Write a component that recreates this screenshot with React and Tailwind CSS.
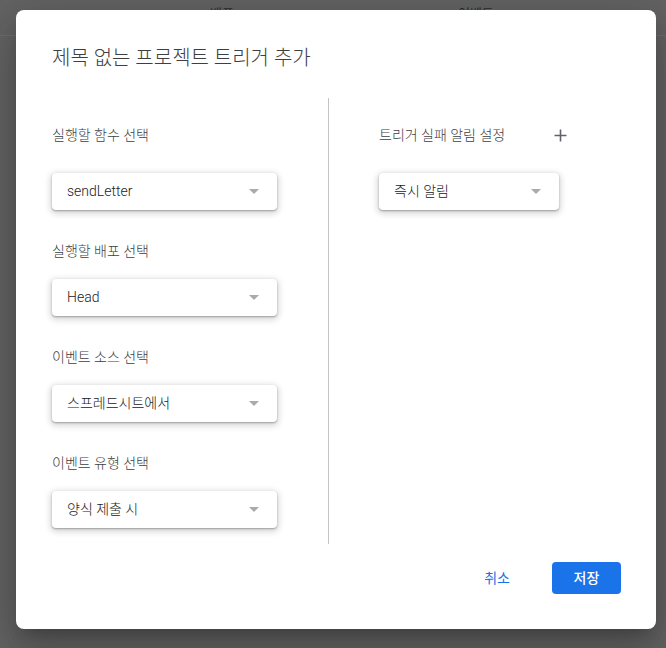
import React from 'react';

function Select({ value, width }) {
    return (
        <div className={`${width} h-[37px] bg-white rounded-[4px] shadow-[0_1px_2px_rgba(0,0,0,0.3),0_2px_6px_2px_rgba(0,0,0,0.15)] flex items-center justify-between pl-[15px] pr-[18px]`}>
            <span className="text-[14px] text-[#202124] font-light">{value}</span>
            <span className="w-0 h-0 border-l-[5px] border-r-[5px] border-t-[5px] border-l-transparent border-r-transparent border-t-[#aaaaaa]"></span>
        </div>
    );
}

function Field({ label, value, first }) {
    return (
        <div className="flex flex-col">
            <div className="text-[14px] text-[#3c4043] font-light h-[20px] leading-[20px]">{label}</div>
            <div className={first ? 'mt-[28px]' : 'mt-[18px]'}>
                <Select value={value} width="w-[225px]" />
            </div>
        </div>
    );
}

export default function App() {
    return (
        <div className="relative w-[666px] h-[648px] overflow-hidden bg-[#636363]" style={{ fontFamily: 'Roboto, "Noto Sans CJK KR", sans-serif' }}>
            {/* page behind the overlay */}
            <div className="h-[36px] border-b border-[#6d6d6d] flex text-[13px] text-[#2a2a2a]">
                <div className="ml-[210px] mt-[4px]">배포</div>
                <div className="ml-[224px] mt-[4px]">이벤트</div>
            </div>

            <div className="absolute left-[16px] top-[10px] w-[640px] h-[619px] bg-white rounded-[8px] shadow-[0_11px_15px_-7px_rgba(0,0,0,0.2),0_24px_38px_3px_rgba(0,0,0,0.14),0_9px_46px_8px_rgba(0,0,0,0.12)] flex flex-col">
                <div className="pl-[36px] pt-[35px] text-[20px] leading-[26px] text-[#3c4043] font-light">제목 없는 프로젝트 트리거 추가</div>

                <div className="flex mt-[27px]">
                    <div className="w-[312px] pl-[36px] pt-[27px] flex flex-col gap-[31px]">
                        <Field label="실행할 함수 선택" value="sendLetter" first />
                        <Field label="실행할 배포 선택" value="Head" />
                        <Field label="이벤트 소스 선택" value="스프레드시트에서" />
                        <Field label="이벤트 유형 선택" value="양식 제출 시" />
                    </div>
                    <div className="w-px h-[446px] bg-[#c4c4c4]"></div>
                    <div className="pl-[50px] pt-[27px] flex flex-col">
                        <div className="flex items-center w-[188px] justify-between h-[20px]">
                            <span className="text-[14px] text-[#3c4043] font-light">트리거 실패 알림 설정</span>
                            <svg width="13" height="13" viewBox="0 0 13 13">
                                <path d="M6.5 0.5v12M0.5 6.5h12" stroke="#5f6368" strokeWidth="1.6" />
                            </svg>
                        </div>
                        <div className="mt-[28px]">
                            <Select value="즉시 알림" width="w-[180px]" />
                        </div>
                    </div>
                </div>

                <div className="flex justify-end items-center mt-[18px] pr-[35px] gap-[36px]">
                    <button className="text-[14px] text-[#1a73e8] px-[6px] h-[32px]">취소</button>
                    <button className="w-[69px] h-[32px] rounded-[4px] bg-[#1a73e8] text-white text-[14px] font-medium">저장</button>
                </div>
            </div>
        </div>
    );
}
